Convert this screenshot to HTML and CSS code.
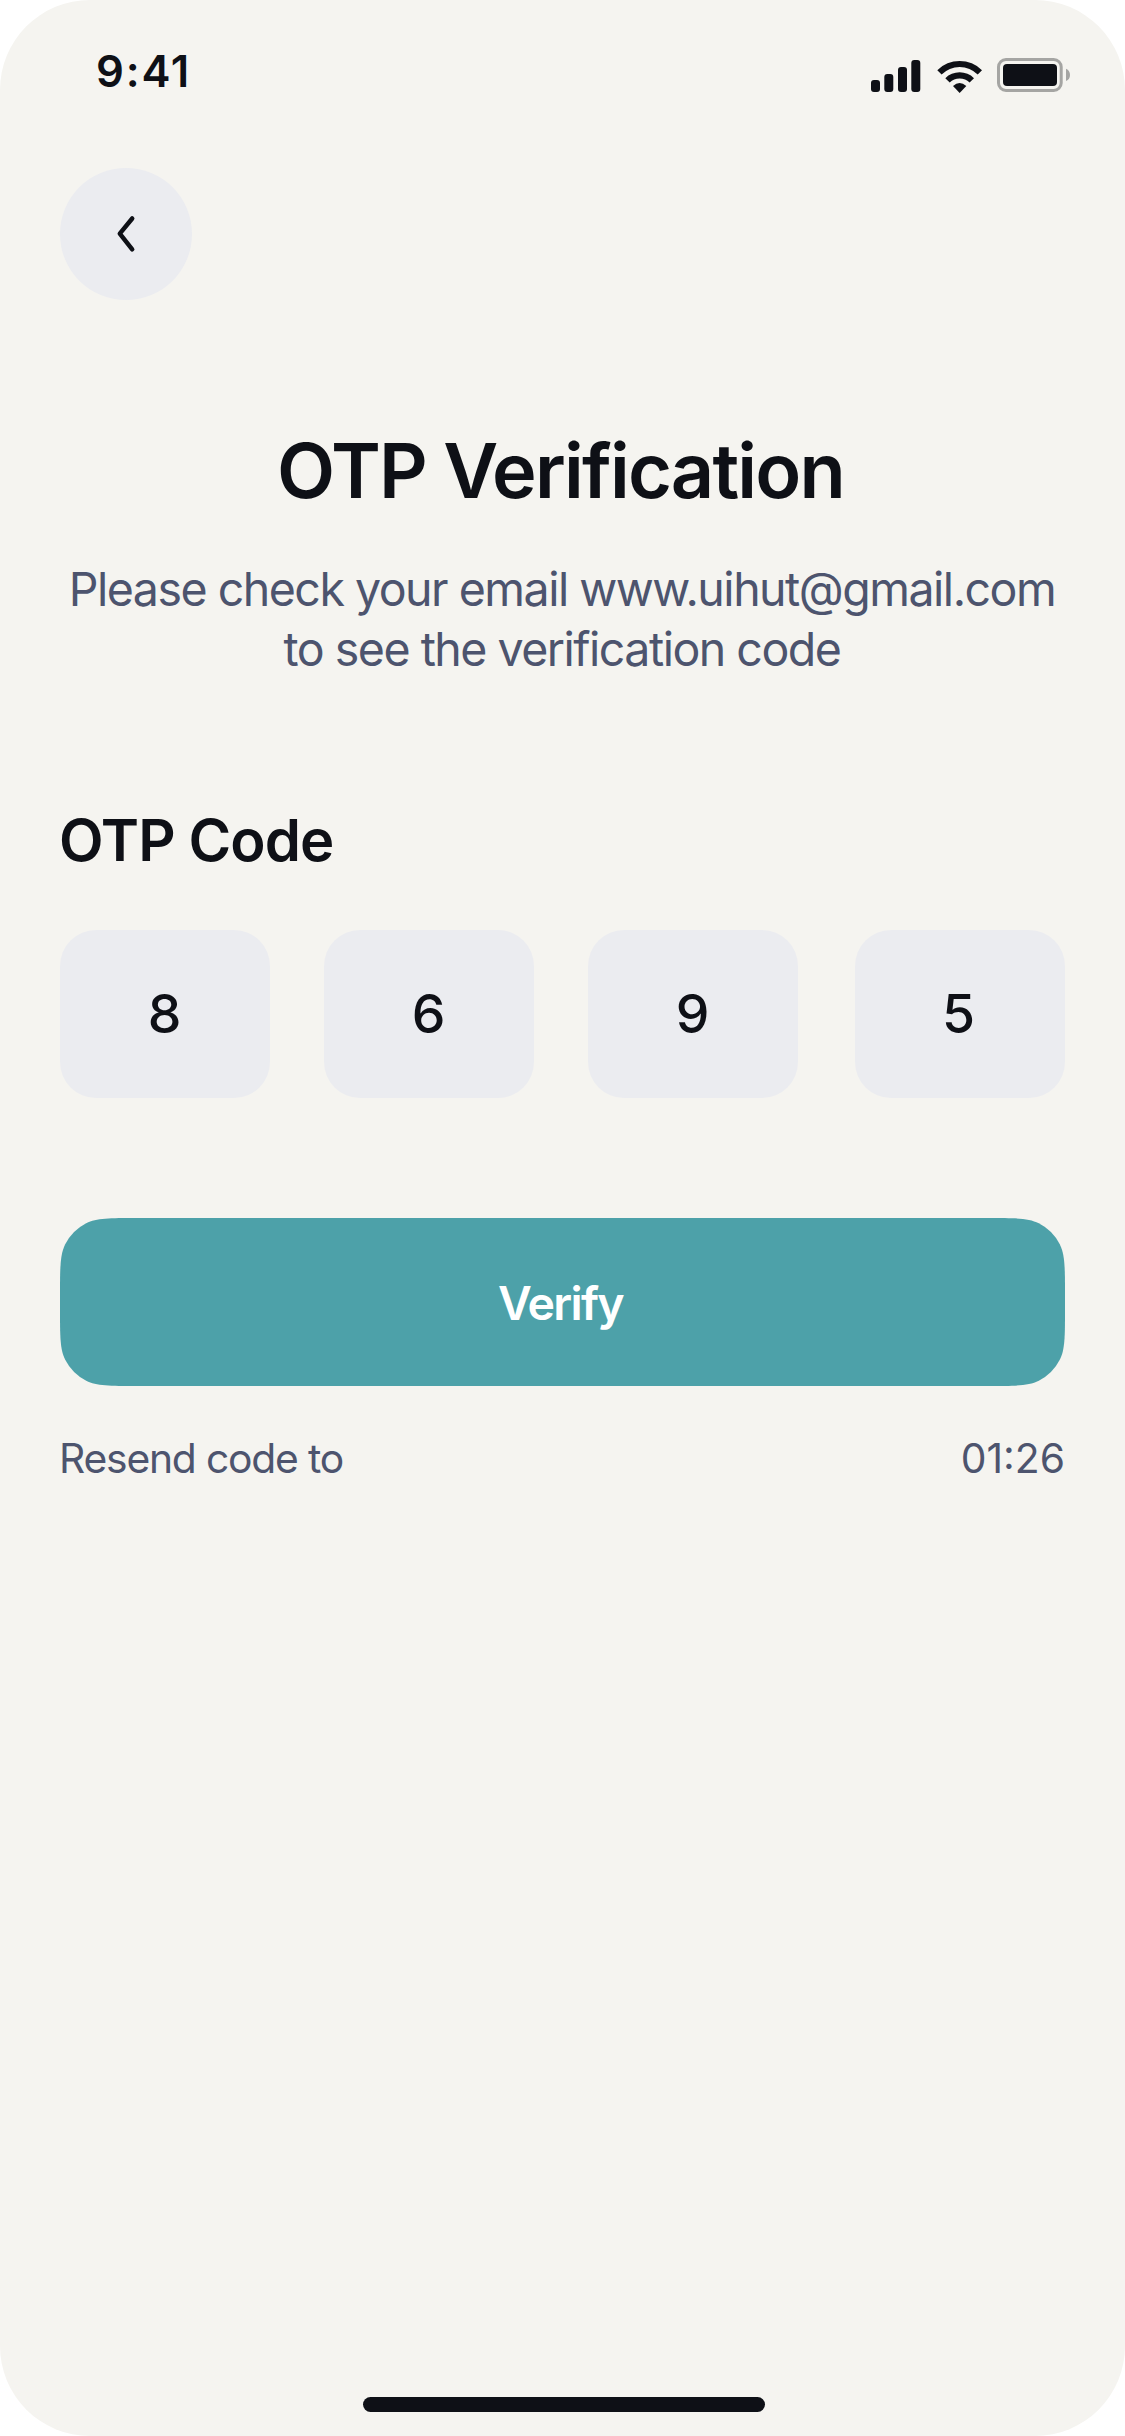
FILE: index.html
```
<!DOCTYPE html>
<html lang="en">
<head>
<meta charset="utf-8">
<title>OTP Verification</title>
<link rel="stylesheet" href="styles.css">
</head>
<body>
<main class="screen">
  <header class="status-bar">
    <span class="time">9:41</span>
    <svg class="status-icons" width="200" height="36" viewBox="0 0 200 36" aria-hidden="true">
      <g fill="#0e1016">
        <rect x="1" y="22" width="9" height="12" rx="3"/>
        <rect x="14.3" y="16" width="9" height="18" rx="3"/>
        <rect x="28" y="9" width="9" height="25" rx="3"/>
        <rect x="41.3" y="2" width="9" height="32" rx="3"/>
        <path d="M67.3 12.2A31.5 31.5 0 0 1 112 12.2L107.7 16.6A25.4 25.4 0 0 0 71.6 16.6Z"/>
        <path d="M75.3 20.2A20.3 20.3 0 0 1 104 20.2L99.6 24.6A14 14 0 0 0 79.7 24.6Z"/>
        <path d="M83 28Q89.65 21.9 96.3 28L89.65 35Z"/>
        <rect x="133" y="6" width="54" height="22" rx="4"/>
      </g>
      <rect x="128.5" y="1.5" width="62.7" height="31" rx="7.5" fill="none" stroke="#a5a5a3" stroke-width="3"/>
      <path d="M196 10.7Q200 12.5 200 16.9T196 23Z" fill="#a5a5a3"/>
    </svg>
  </header>
  <button class="back" aria-label="Back">
    <svg width="24" height="40" viewBox="0 0 24 40" fill="none" stroke="#0e1016" stroke-width="4.5" stroke-linecap="round" stroke-linejoin="round"><path d="M18.2 4.5L5.8 19.7L18.2 35.3"/></svg>
  </button>
  <h1 class="title">OTP Verification</h1>
  <p class="subtitle">Please check your email www.uihut@gmail.com<br>to see the verification code</p>
  <h2 class="label">OTP Code</h2>
  <div class="code">
    <span class="digit">8</span><span class="digit">6</span><span class="digit">9</span><span class="digit">5</span>
  </div>
  <button class="verify">Verify</button>
  <div class="resend"><span>Resend code to</span><span class="timer">01:26</span></div>
  <div class="home"></div>
</main>
</body>
</html>
```
FILE: styles.css
```
* { box-sizing: border-box; margin: 0; padding: 0; }
body { background: #fff; font-family: Inter, "Liberation Sans", sans-serif; color: #0e1016; }
button { border: 0; font: inherit; }
.screen {
  display: flex; flex-direction: column;
  width: 1125px; height: 2436px; padding: 0 60px 24px;
  background: #f5f4f0; border-radius: 90px;
}
.status-bar { display: flex; justify-content: space-between; height: 168px; padding: 44px 0 0 36px; }
.time { font-size: 43.6px; font-weight: 600; line-height: 55px; letter-spacing: 1.8px; }
.status-icons { margin: 14px -5px 0 0; }
.back { display: flex; align-items: center; justify-content: center; width: 132px; height: 132px; border-radius: 50%; background: #ebecf0; }
.title { margin-top: 120px; padding-right: 4px; font-size: 75.6px; font-weight: 600; line-height: 102px; letter-spacing: -1.8px; text-align: center; }
.subtitle { margin-top: 37px; padding-right: 1px; font-size: 46.5px; line-height: 60px; letter-spacing: -1.5px; color: #4d546e; text-align: center; white-space: nowrap; }
.label { margin: 121px 0 0 -1px; font-size: 58px; font-weight: 600; line-height: 80px; letter-spacing: -0.9px; }
.code { display: flex; gap: 54px; margin-top: 50px; }
.digit { display: flex; align-items: center; justify-content: center; width: 210px; height: 168px; padding: 0 1px 1px 0; border-radius: 36px; background: #ebecf0; font-size: 53.5px; font-weight: 500; }
.digit:last-child { margin-left: 3px; padding-right: 3px; }
/* Rounded corners that ease into the straight edges */
.verify {
  height: 168px; margin-top: 120px; padding: 2px 4px 0 0;
  background: #4da1a9; color: #fff; font-size: 46.5px; font-weight: 600; letter-spacing: -1.7px;
  clip-path: path("M76.8 0H928.2C955.08 0 968.52 0 978.79 5.23A48 48 0 0 1 999.77 26.21C1005 36.48 1005 49.92 1005 76.8V91.2C1005 118.08 1005 131.52 999.77 141.79A48 48 0 0 1 978.79 162.77C968.52 168 955.08 168 928.2 168H76.8C49.92 168 36.48 168 26.21 162.77A48 48 0 0 1 5.23 141.79C0 131.52 0 118.08 0 91.2V76.8C0 49.92 0 36.48 5.23 26.21A48 48 0 0 1 26.21 5.23C36.48 0 49.92 0 76.8 0Z");
}
.resend { display: flex; justify-content: space-between; margin: 48px 0 0 -1px; color: #4d546e; font-size: 40.8px; line-height: 48px; letter-spacing: -1.2px; }
.timer { letter-spacing: 0; }
.home { width: 402px; height: 15px; margin: auto 0 0 303px; border-radius: 8px; background: #0e1016; }
```
